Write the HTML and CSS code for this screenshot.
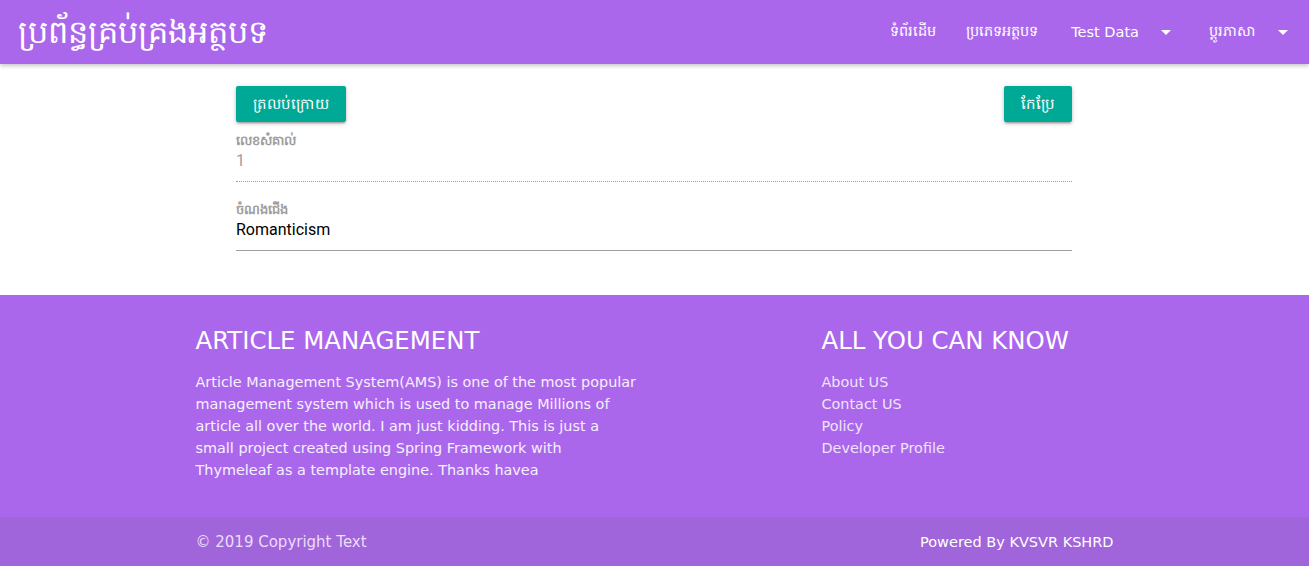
FILE: index.html
```html
<!DOCTYPE html>
<html lang="km">
<head>
<meta charset="utf-8">
<title>ប្រព័ន្ធគ្រប់គ្រងអត្ថបទ</title>
<link rel="stylesheet" href="styles.css">
</head>
<body>
<nav class="navbar">
  <a class="brand" href="#">ប្រព័ន្ធគ្រប់គ្រងអត្ថបទ</a>
  <ul class="menu">
    <li><a href="#">ទំព័រដើម</a></li>
    <li><a href="#">ប្រភេទអត្ថបទ</a></li>
    <li><a href="#" class="dd">Test Data<span class="caret"></span></a></li>
    <li><a href="#" class="dd">ប្តូរភាសា<span class="caret"></span></a></li>
  </ul>
</nav>

<main class="content">
  <div class="actions">
    <a class="btn" href="#">ត្រលប់ក្រោយ</a>
    <a class="btn" href="#">កែប្រែ</a>
  </div>
  <div class="field disabled">
    <label class="field-label">លេខសំគាល់</label>
    <div class="field-value">1</div>
  </div>
  <div class="field">
    <label class="field-label">ចំណងជើង</label>
    <div class="field-value">Romanticism</div>
  </div>
</main>

<footer class="footer">
  <div class="footer-inner">
    <div class="footer-col">
      <h5>ARTICLE MANAGEMENT</h5>
      <p>Article Management System(AMS) is one of the most popular management system which is used to manage Millions of article all over the world. I am just kidding. This is just a small project created using Spring Framework with Thymeleaf as a template engine. Thanks havea</p>
    </div>
    <div class="footer-col links">
      <h5>ALL YOU CAN KNOW</h5>
      <ul>
        <li><a href="#">About US</a></li>
        <li><a href="#">Contact US</a></li>
        <li><a href="#">Policy</a></li>
        <li><a href="#">Developer Profile</a></li>
      </ul>
    </div>
  </div>
  <div class="copyright">
    <div class="copyright-inner">
      <span>© 2019 Copyright Text</span>
      <span class="powered">Powered By KVSVR KSHRD</span>
    </div>
  </div>
</footer>
</body>
</html>
```
FILE: styles.css
```css
* { box-sizing: border-box; }
html, body { margin: 0; padding: 0; }
body {
  font-family: Roboto, "Noto Sans", sans-serif;
  background: #fff;
  color: #000;
}
a { text-decoration: none; color: inherit; }

.navbar {
  height: 64px;
  background: #ab67ec;
  display: flex;
  align-items: center;
  justify-content: space-between;
  padding: 0 6px 0 18px;
  box-shadow: 0 2px 4px rgba(0,0,0,0.22);
  position: relative;
  z-index: 2;
}
.brand {
  color: #fff;
  font-size: 32px;
  line-height: 64px;
}
.menu {
  list-style: none;
  margin: 0;
  padding: 0;
  display: flex;
  height: 64px;
}
.menu li a {
  display: flex;
  align-items: center;
  height: 64px;
  padding: 0 15px;
  color: #fff;
  font-size: 14.5px;
  font-weight: 500;
}
.menu li a.dd {
  font-family: "DejaVu Sans", sans-serif;
  font-size: 14.5px;
}
.menu li:nth-child(3) a { padding-left: 18px; }
.menu li:nth-child(4) a { padding-left: 23px; }
.caret {
  display: inline-block;
  width: 0; height: 0;
  border-left: 5px solid transparent;
  border-right: 5px solid transparent;
  border-top: 5px solid #fff;
  margin-left: 22px;
}

.content {
  width: 837px;
  margin: 0 auto;
  padding: 22px 1px 44px 0;
}
.actions {
  display: flex;
  justify-content: space-between;
}
.btn {
  display: inline-block;
  background: #00a896;
  color: #fff;
  height: 36px;
  line-height: 36px;
  padding: 0 17px;
  border-radius: 2px;
  font-size: 15px;
  box-shadow: 0 2px 2px rgba(0,0,0,0.14), 0 3px 1px -2px rgba(0,0,0,0.12), 0 1px 5px rgba(0,0,0,0.2);
}
.field {
  border-bottom: 1px solid #9e9e9e;
  padding-top: 10px;
  padding-bottom: 9px;
}
.field.disabled {
  border-bottom: 1px dotted #9e9e9e;
  margin-bottom: 9px;
}
.field-label {
  display: block;
  font-size: 13px;
  font-weight: 700;
  color: #9e9e9e;
  line-height: 18px;
}
.field-value {
  font-size: 16px;
  line-height: 22px;
  color: #000;
}
.field.disabled .field-value { color: #9e9e9e; }

.footer {
  background: #ab67ec;
  color: #fff;
  font-family: "DejaVu Sans", Verdana, sans-serif;
}
.footer-inner {
  width: 918px;
  margin: 0 auto;
  display: grid;
  grid-template-columns: 626px 1fr;
  padding: 30px 0 36px;
}
.footer h5 {
  font-size: 24.4px;
  font-weight: 400;
  margin: 0 0 14px;
  line-height: 32px;
}
.footer p {
  margin: 0;
  font-size: 14.4px;
  line-height: 22px;
  width: 442px;
  color: #f6efff;
}
.links ul {
  list-style: none;
  margin: 0;
  padding: 0;
}
.links li {
  font-size: 14.4px;
  line-height: 22px;
  color: #efe3fb;
}
.copyright {
  background: #a064db;
  height: 49px;
}
.copyright-inner {
  width: 918px;
  margin: 0 auto;
  height: 49px;
  display: flex;
  align-items: center;
  justify-content: space-between;
  font-size: 15px;
  color: #ecdcfb;
}
.powered { color: #fff; font-size: 14.5px; }
```
